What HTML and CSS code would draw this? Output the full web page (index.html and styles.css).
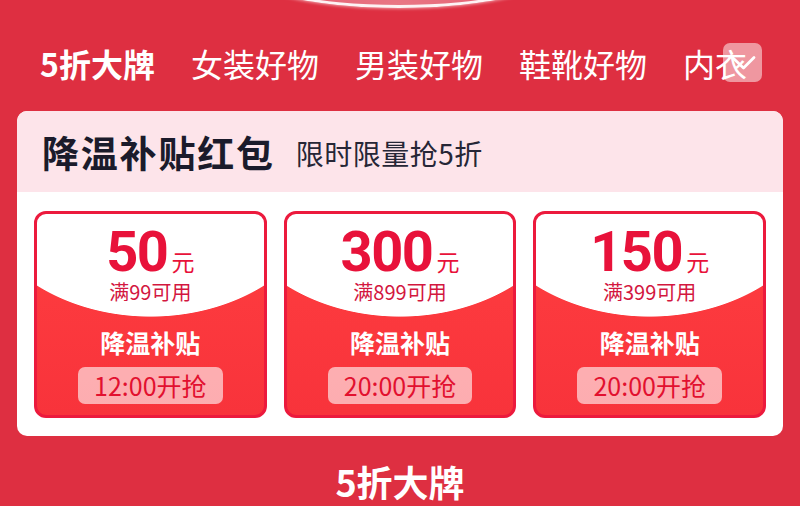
FILE: index.html
```html
<!DOCTYPE html>
<html lang="zh">
<head>
<meta charset="utf-8">
<link rel="stylesheet" href="styles.css">
</head>
<body>
<div class="page">
  <div class="deco"></div>
  <nav class="tabs">
    <span class="tab active">5折大牌</span>
    <span class="tab">女装好物</span>
    <span class="tab">男装好物</span>
    <span class="tab">鞋靴好物</span>
    <span class="tab">内衣</span>
    <div class="more">
      <svg width="39" height="39" viewBox="0 0 39 39"><path d="M10 15 L20.5 25 L31 14.5" fill="none" stroke="#fff" stroke-width="2.8" stroke-linecap="round" stroke-linejoin="round"/></svg>
    </div>
  </nav>
  <section class="panel">
    <div class="panel-head">
      <h2 class="panel-title">降温补贴红包</h2>
      <span class="panel-sub">限时限量抢5折</span>
    </div>
    <div class="coupons">
      <div class="coupon">
        <div class="amount"><span class="num">50</span><span class="unit">元</span></div>
        <div class="cond">满99可用</div>
        <div class="name">降温补贴</div>
        <div class="pill">12:00开抢</div>
      </div>
      <div class="coupon">
        <div class="amount"><span class="num">300</span><span class="unit">元</span></div>
        <div class="cond">满899可用</div>
        <div class="name">降温补贴</div>
        <div class="pill">20:00开抢</div>
      </div>
      <div class="coupon">
        <div class="amount"><span class="num">150</span><span class="unit">元</span></div>
        <div class="cond">满399可用</div>
        <div class="name">降温补贴</div>
        <div class="pill">20:00开抢</div>
      </div>
    </div>
  </section>
  <h3 class="section-title">5折大牌</h3>
</div>
</body>
</html>
```
FILE: styles.css
```css
* { box-sizing: border-box; }
html, body { margin: 0; padding: 0; }
body {
  width: 800px;
  height: 506px;
  overflow: hidden;
  background: #de2f41;
  font-family: "Noto Sans CJK SC", "Noto Sans", sans-serif;
}
.page {
  position: relative;
  width: 800px;
  height: 506px;
  overflow: hidden;
  padding: 0 17px;
}
.deco {
  position: absolute;
  left: 238px;
  top: -72px;
  width: 322px;
  height: 80px;
  border-radius: 50%;
  background: radial-gradient(ellipse at 50% 100%, #e97785 0%, #e2566a 70%);
  border: 3px solid rgba(255,255,255,0.92);
  box-shadow: 0 1px 3px rgba(255,255,255,0.5);
}
.tabs {
  position: relative;
  display: flex;
  gap: 36px;
  margin: 0 -17px;
  padding: 40px 0 0 40px;
  height: 86px;
  overflow: hidden;
  white-space: nowrap;
}
.tab {
  flex: none;
  color: #fff;
  font-size: 32px;
  line-height: 46px;
  font-weight: 400;
}
.tab.active { font-weight: 700; }
.more {
  position: absolute;
  left: 723px;
  top: 43px;
  width: 39px;
  height: 39px;
  border-radius: 7px;
  background: rgba(255,255,255,0.5);
}
.more svg { display: block; }
.panel {
  margin-top: 25px;
  height: 325px;
  background: #fff;
  border-radius: 10px;
  overflow: hidden;
}
.panel-head {
  height: 81px;
  background: #fde4ea;
  display: flex;
  align-items: center;
  padding-left: 25px;
}
.panel-title {
  margin: 0;
  font-size: 37px;
  font-weight: 700;
  color: #1b1b2b;
  letter-spacing: 1.8px;
}
.panel-sub {
  margin-left: 21px;
  font-size: 28px;
  color: #262636;
  margin-top: 3px;
  letter-spacing: 0.5px;
}
.coupons {
  display: flex;
  gap: 17px;
  padding: 19px 17px 18px;
}
.coupon {
  flex: 1;
  height: 207px;
  border: 3px solid #ec1a3d;
  border-radius: 12px;
  text-align: center;
  padding-top: 10px;
  background:
    radial-gradient(ellipse 180px 138px at 50% -35px, #fff 99.4%, rgba(255,255,255,0) 100%),
    linear-gradient(#ff3e40, #f8333b);
}
.amount {
  height: 56px;
  line-height: 56px;
  color: #e8123a;
  white-space: nowrap;
}
.num {
  font-family: "Liberation Sans Narrow", "Roboto", sans-serif;
  font-size: 56px;
  font-weight: 700;
  letter-spacing: -1.5px;
}
.unit {
  font-size: 23px;
  margin-left: 4px;
}
.cond {
  font-size: 20px;
  line-height: 24px;
  color: #d3173f;
}
.name {
  margin-top: 23px;
  font-size: 25px;
  line-height: 30px;
  font-weight: 700;
  color: #fff;
}
.pill {
  display: inline-block;
  margin-top: 10px;
  height: 37px;
  line-height: 37px;
  padding: 0 16px;
  border-radius: 7px;
  background: rgba(255,255,255,0.6);
  color: #e2102f;
  font-size: 25px;
}
.section-title {
  margin: 25px 0 0;
  text-align: center;
  color: #fff;
  font-size: 36px;
  line-height: 40px;
  font-weight: 700;
}
```
